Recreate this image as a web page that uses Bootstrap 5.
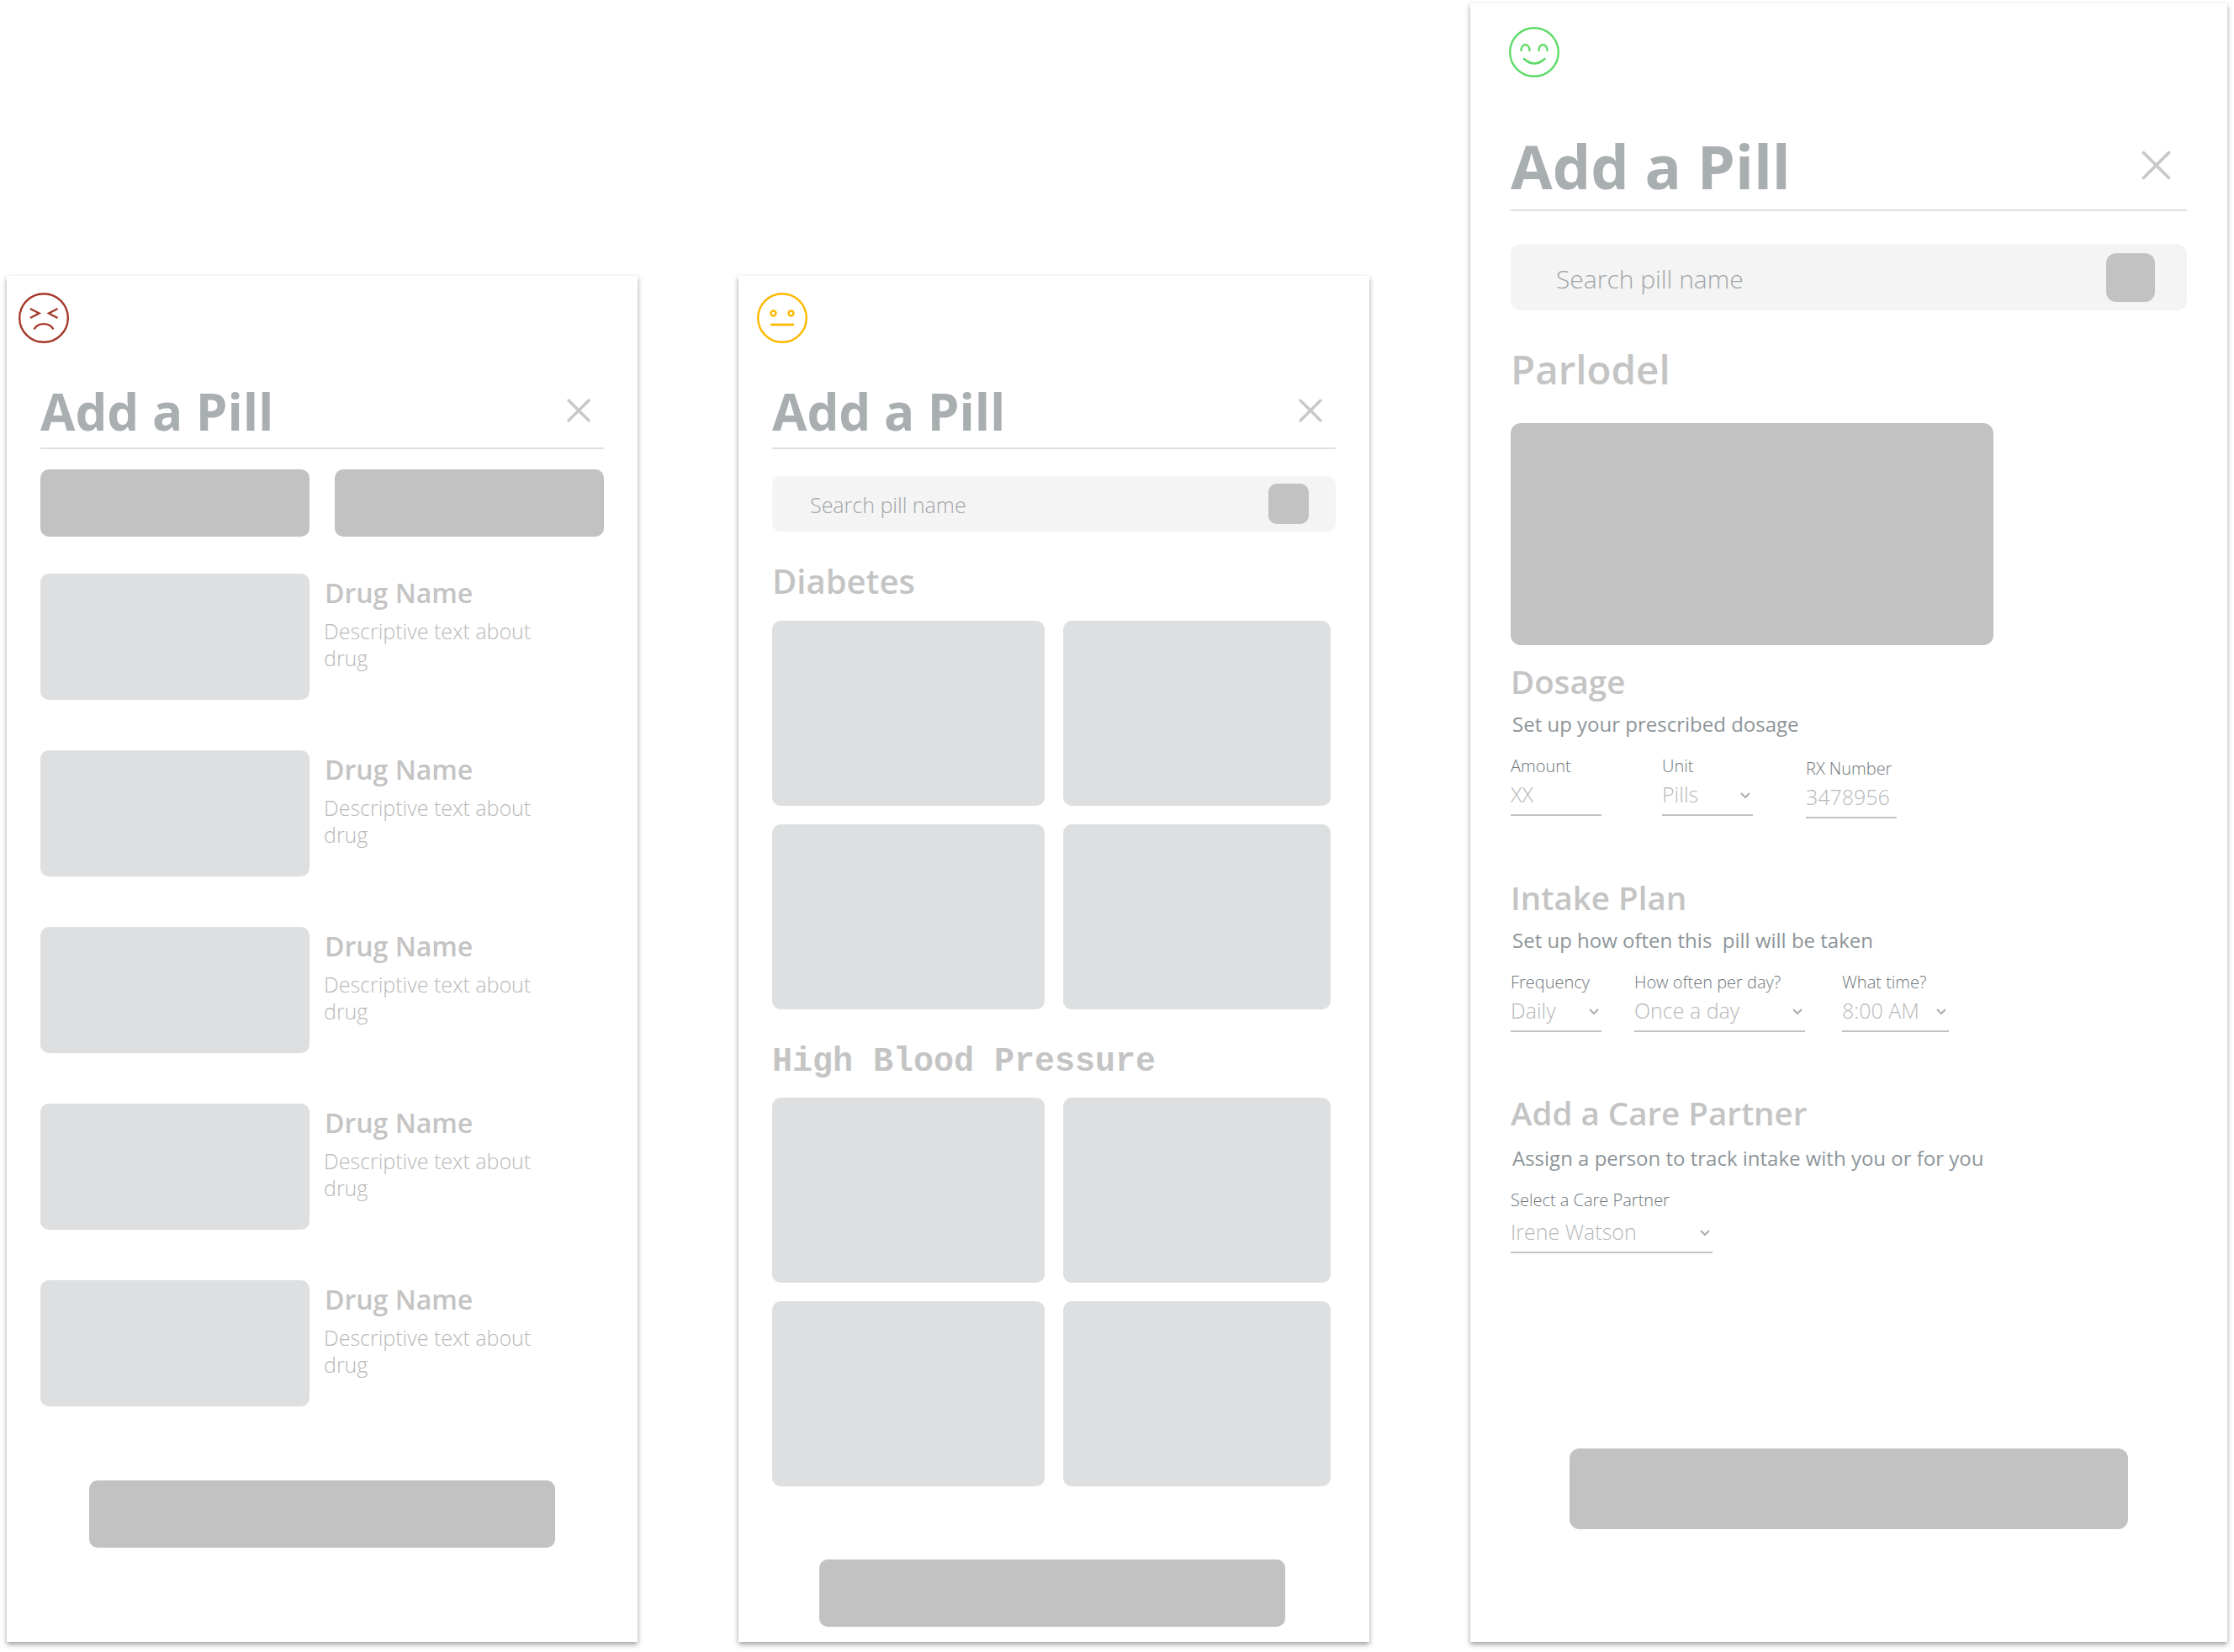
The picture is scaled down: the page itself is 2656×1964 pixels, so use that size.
<!DOCTYPE html>
<html lang="en">

<head>
    <meta charset="UTF-8">
    <meta name="viewport" content="width=device-width, initial-scale=1.0">
    <title>Add a Pill</title>
    <!-- Bootstrap CSS -->
    <link href="https://cdn.jsdelivr.net/npm/bootstrap@5.3.0/dist/css/bootstrap.min.css" rel="stylesheet">
    <style>
        body {
            background: #fff;
            font-family: "Open Sans", sans-serif;
            color: #c4c4c4;
        }

        .canvas {
            height: 1964px;
            padding: 0 0 12px 8px;
            gap: 120px;
        }

        /* phone frames */
        .phone {
            width: 750px;
            height: 1624px;
            padding: 20px 40px 0;
            background: #fff;
            box-shadow: 0 3px 6px rgba(0, 0, 0, .38);
        }

        .phone-lg {
            width: 900px;
            height: 1948px;
            padding: 28px 48px 0;
        }

        .face {
            display: block;
            width: 60px;
            height: 60px;
        }

        .face-sad {
            margin-left: -26px;
        }

        .face-meh {
            margin-left: -18px;
        }

        .face-happy {
            margin-left: -2px;
        }

        .page-head {
            margin-top: 42px;
            height: 84px;
            border-bottom: 2px solid #dfe0e1;
        }

        .page-title {
            font-size: 60px;
            line-height: 78px;
            font-weight: 700;
            color: #a9aeb0;
            margin: 0;
        }

        .close-x {
            width: 28px;
            height: 28px;
            margin: 24px 16px 0 0;
        }

        .phone-lg .page-head {
            margin-top: 60px;
            height: 99px;
        }

        .phone-lg .page-title {
            font-size: 72px;
            line-height: 90px;
        }

        .phone-lg .close-x {
            width: 35px;
            height: 35px;
            margin: 27px 19px 0 0;
        }

        .block {
            background: #c2c2c2;
            border-radius: 10px;
        }

        .tab-row {
            margin-top: 24px;
        }

        .tab-btn {
            width: 320px;
            height: 80px;
        }

        .thumb {
            background: #dedfe0;
            border-radius: 10px;
        }

        .drug-list {
            margin-top: 44px;
            padding-bottom: 28px;
        }

        .drug-row {
            height: 150px;
            margin-bottom: 60px;
        }

        .drug-row .thumb {
            width: 320px;
            height: 150px;
        }

        .drug-name {
            font-size: 32px;
            line-height: 44px;
            font-weight: 600;
            margin: 1px 0 0 18px;
        }

        .drug-text {
            width: 270px;
            font-size: 25px;
            line-height: 32px;
            font-weight: 300;
            color: #b9b9b9;
            margin: 7px 0 0 17px;
        }

        .cta {
            width: 554px;
            height: 80px;
        }

        .cta-browse {
            margin: 87px 0 0 56px;
        }

        .cta-lg {
            width: 664px;
            height: 96px;
            margin-top: 232px;
            border-radius: 12px;
        }

        .search-box {
            height: 66px;
            margin-top: 32px;
            padding: 0 32px 0 45px;
            background: #f4f4f4;
            border-radius: 10px;
            font-size: 25px;
            font-weight: 300;
            color: #a0a5a8;
        }

        .search-box span {
            padding-top: 4px;
        }

        .search-go {
            width: 48px;
            height: 48px;
        }

        .phone-lg .search-box {
            height: 79px;
            margin-top: 39px;
            padding: 0 38px 0 54px;
            font-size: 30px;
            border-radius: 12px;
        }

        .phone-lg .search-go {
            width: 58px;
            height: 58px;
            border-radius: 12px;
        }

        .group-head {
            font-size: 40px;
            line-height: 54px;
            font-weight: 600;
            margin: 32px 0 20px;
        }

        .mono-head {
            font-family: "Liberation Mono", monospace;
            font-weight: 700;
            margin: 36px 0 15px;
        }

        .tile-grid {
            display: grid;
            grid-template-columns: 324px 318px;
            grid-auto-rows: 220px;
            gap: 22px;
        }

        .drug-title {
            font-size: 47.5px;
            line-height: 64px;
            font-weight: 600;
            margin: 38px 0 32px;
        }

        .pill-pic {
            width: 574px;
            height: 264px;
            border-radius: 12px;
        }

        .sec-head {
            font-size: 38.5px;
            line-height: 54px;
            font-weight: 600;
            margin: 16px 0 0;
        }

        .sec-plan {
            margin-top: 67px;
        }

        .sec-care {
            margin-top: 69px;
        }

        .sec-sub {
            font-size: 24px;
            line-height: 32px;
            color: #8d9599;
            margin: 8px 0 0 2px;
        }

        .sec-care + .sec-sub {
            margin-top: 11px;
        }

        .field-row {
            margin-top: 19px;
        }

        .field-label {
            display: block;
            height: 28px;
            padding-top: 1px;
            font-size: 20px;
            line-height: 27px;
            font-weight: 300;
            color: #6f777c;
            margin: 0;
        }

        .field-value {
            height: 46px;
            padding-bottom: 4px;
            font-size: 25px;
            line-height: 40px;
            font-weight: 300;
            color: #b6b8ba;
            border-bottom: 2px solid #c2c2c2;
        }

        .field-care .field-value {
            height: 50px;
            padding-top: 4px;
        }

        .field-sm {
            width: 108px;
        }

        .field-rx {
            margin: 3px 0 0 63px;
        }

        .field-unit {
            margin-left: 72px;
        }

        .field-often {
            width: 203px;
            margin-left: 39px;
        }

        .field-time {
            width: 127px;
            margin-left: 44px;
        }

        .field-care {
            width: 240px;
        }

        .chev {
            width: 14px;
            height: 10px;
            margin: 3px 2px 0 0;
        }
    </style>
</head>

<body>
    <div class="canvas d-flex align-items-end">

        <!-- search results -->
        <div class="phone">
            <svg class="face face-sad" viewBox="0 0 60 60" fill="none" stroke="#a5392a" stroke-width="2.4">
                <circle cx="30" cy="30" r="28.8"></circle>
                <path d="M14 19l10.500 5.500L14 30M46.500 19L36 24.500 46.500 30"></path>
                <path d="M18.500 43.500c4.500-8.500 18.500-8.500 23 0"></path>
            </svg>
            <div class="page-head d-flex justify-content-between">
                <h1 class="page-title">Add a Pill</h1>
                <svg class="close-x" viewBox="0 0 28 28" stroke="#c8c8c8" stroke-width="3.400" stroke-linecap="round">
                    <path d="M2 2l24 24M26 2L2 26"></path>
                </svg>
            </div>
            <div class="tab-row d-flex justify-content-between">
                <div class="block tab-btn"></div>
                <div class="block tab-btn"></div>
            </div>
            <div class="drug-list" id="drugList"></div>
            <div class="block cta mx-auto"></div>
        </div>

        <!-- browse by condition -->
        <div class="phone">
            <svg class="face face-meh" viewBox="0 0 60 60" fill="none" stroke="#fdb900" stroke-width="2.4">
                <circle cx="30" cy="30" r="28.8"></circle>
                <circle cx="19.500" cy="24.500" r="3"></circle>
                <circle cx="40.500" cy="24.500" r="3"></circle>
                <path d="M16 38h28" stroke-width="2.800"></path>
            </svg>
            <div class="page-head d-flex justify-content-between">
                <h1 class="page-title">Add a Pill</h1>
                <svg class="close-x" viewBox="0 0 28 28" stroke="#c8c8c8" stroke-width="3.400" stroke-linecap="round">
                    <path d="M2 2l24 24M26 2L2 26"></path>
                </svg>
            </div>
            <div class="search-box d-flex align-items-center justify-content-between">
                <span>Search pill name</span>
                <div class="block search-go"></div>
            </div>
            <h2 class="group-head">Diabetes</h2>
            <div class="tile-grid">
                <div class="thumb"></div>
                <div class="thumb"></div>
                <div class="thumb"></div>
                <div class="thumb"></div>
            </div>
            <h2 class="group-head mono-head">High Blood Pressure</h2>
            <div class="tile-grid">
                <div class="thumb"></div>
                <div class="thumb"></div>
                <div class="thumb"></div>
                <div class="thumb"></div>
            </div>
            <div class="block cta cta-browse"></div>
        </div>

        <!-- pill details -->
        <div class="phone phone-lg">
            <svg class="face face-happy" viewBox="0 0 60 60" fill="none" stroke="#5ddb66" stroke-width="2.4"
                stroke-linecap="round">
                <circle cx="30" cy="30" r="28.8"></circle>
                <path d="M14.500 28c0-9 10-9 10 0M35.500 28c0-9 10-9 10 0"></path>
                <path d="M18 38q12 11 24.500 0"></path>
            </svg>
            <div class="page-head d-flex justify-content-between">
                <h1 class="page-title">Add a Pill</h1>
                <svg class="close-x" viewBox="0 0 28 28" stroke="#c8c8c8" stroke-width="3" stroke-linecap="round">
                    <path d="M2 2l24 24M26 2L2 26"></path>
                </svg>
            </div>
            <div class="search-box d-flex align-items-center justify-content-between">
                <span>Search pill name</span>
                <div class="block search-go"></div>
            </div>
            <h2 class="drug-title">Parlodel</h2>
            <div class="block pill-pic"></div>
            <h3 class="sec-head">Dosage</h3>
            <p class="sec-sub">Set up your prescribed dosage</p>
            <div class="field-row d-flex align-items-start">
                <div class="field-sm">
                    <label class="field-label">Amount</label>
                    <div class="field-value">XX</div>
                </div>
                <div class="field-sm field-unit">
                    <label class="field-label">Unit</label>
                    <div class="field-value d-flex justify-content-between align-items-center">Pills
                        <svg class="chev" viewBox="0 0 14 10" fill="none" stroke="#a9aeb0" stroke-width="2"><path d="M2 2l5 5 5-5"></path></svg>
                    </div>
                </div>
                <div class="field-sm field-rx">
                    <label class="field-label">RX Number</label>
                    <div class="field-value">3478956</div>
                </div>
            </div>
            <h3 class="sec-head sec-plan">Intake Plan</h3>
            <p class="sec-sub">Set up how often this &nbsp;pill will be taken</p>
            <div class="field-row d-flex">
                <div class="field-sm">
                    <label class="field-label">Frequency</label>
                    <div class="field-value d-flex justify-content-between align-items-center">Daily
                        <svg class="chev" viewBox="0 0 14 10" fill="none" stroke="#a9aeb0" stroke-width="2"><path d="M2 2l5 5 5-5"></path></svg>
                    </div>
                </div>
                <div class="field-often">
                    <label class="field-label">How often per day?</label>
                    <div class="field-value d-flex justify-content-between align-items-center">Once a day
                        <svg class="chev" viewBox="0 0 14 10" fill="none" stroke="#a9aeb0" stroke-width="2"><path d="M2 2l5 5 5-5"></path></svg>
                    </div>
                </div>
                <div class="field-time">
                    <label class="field-label">What time?</label>
                    <div class="field-value d-flex justify-content-between align-items-center">8:00 AM
                        <svg class="chev" viewBox="0 0 14 10" fill="none" stroke="#a9aeb0" stroke-width="2"><path d="M2 2l5 5 5-5"></path></svg>
                    </div>
                </div>
            </div>
            <h3 class="sec-head sec-care">Add a Care Partner</h3>
            <p class="sec-sub">Assign a person to track intake with you or for you</p>
            <div class="field-row field-care">
                <label class="field-label">Select a Care Partner</label>
                <div class="field-value d-flex justify-content-between align-items-center">Irene Watson
                    <svg class="chev" viewBox="0 0 14 10" fill="none" stroke="#a9aeb0" stroke-width="2"><path d="M2 2l5 5 5-5"></path></svg>
                </div>
            </div>
            <div class="block cta cta-lg mx-auto"></div>
        </div>
    </div>

    <!-- Bootstrap JS -->
    <script src="https://cdn.jsdelivr.net/npm/bootstrap@5.3.0/dist/js/bootstrap.bundle.min.js"></script>
    <script>
        // five identical placeholder rows
        const list = document.getElementById('drugList');
        for (let i = 0; i < 5; i++) {
            list.innerHTML += `
                <div class="drug-row d-flex">
                    <div class="thumb flex-shrink-0"></div>
                    <div>
                        <div class="drug-name">Drug Name</div>
                        <div class="drug-text">Descriptive text about drug</div>
                    </div>
                </div>`;
        }
    </script>
</body>

</html>
